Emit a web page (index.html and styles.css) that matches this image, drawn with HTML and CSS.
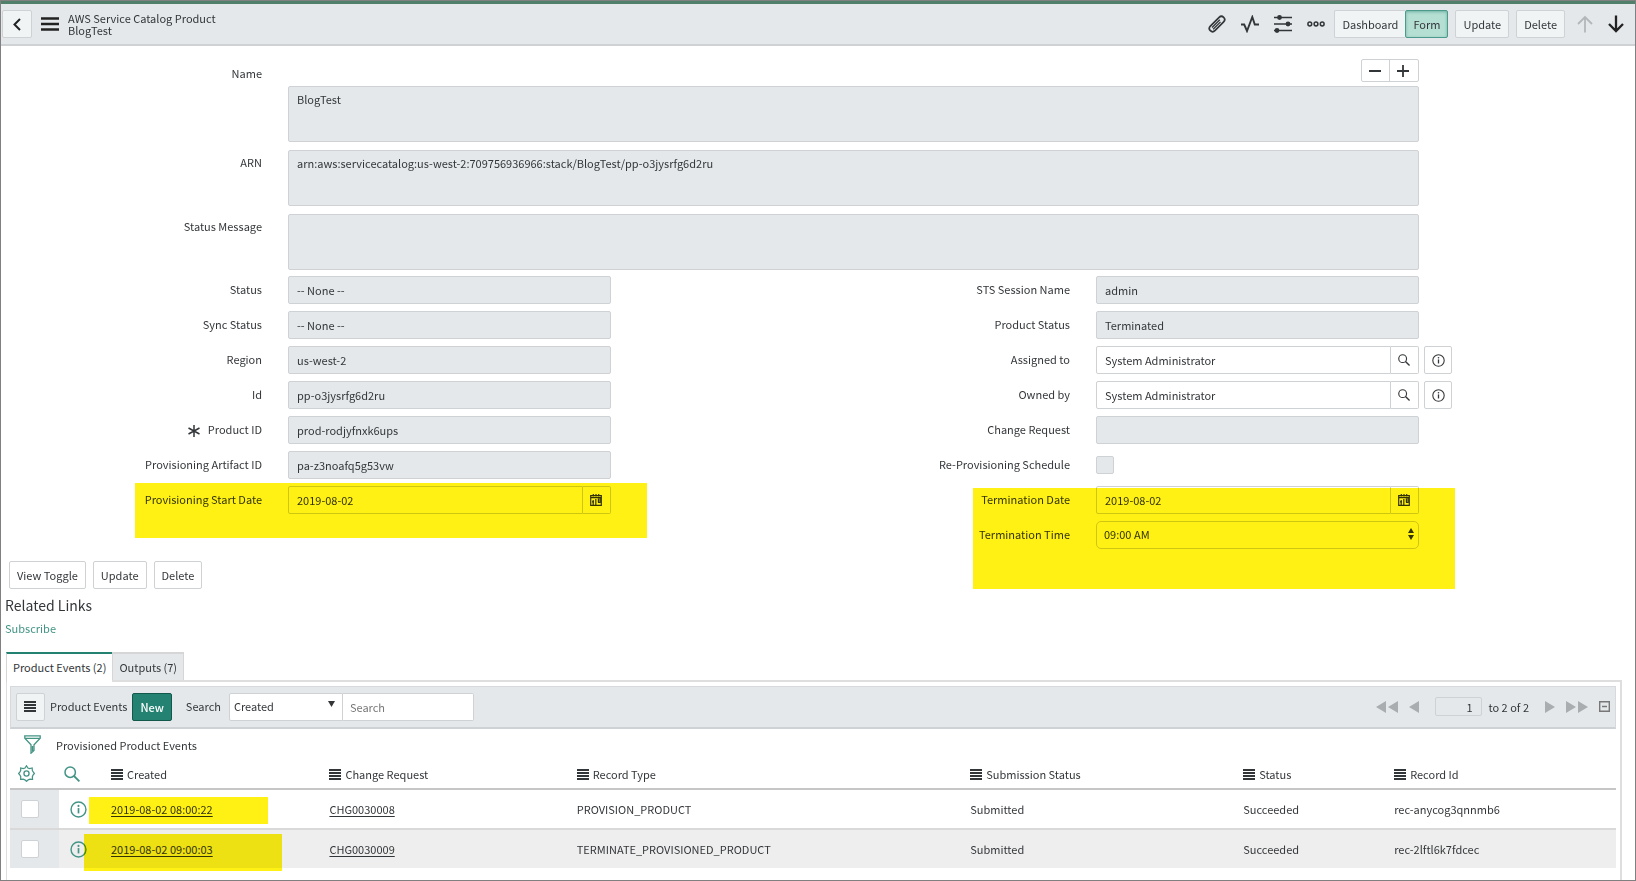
FILE: index.html
```html
<!DOCTYPE html>
<html lang="en">
<head>
  <meta charset="utf-8">
  <title>BlogTest | AWS Service Catalog Product</title>
  <link rel="stylesheet" href="styles.css">
</head>
<body>
  <svg class="sprite" aria-hidden="true">
    <symbol id="icon-bars" viewBox="0 0 18 14">
      <path d="M0 1.5h18M0 7h18M0 12.5h18" fill="none" stroke="currentColor" stroke-width="2.4"/>
    </symbol>
    <symbol id="icon-list" viewBox="0 0 12 11">
      <path d="M0 1h12M0 4h12M0 7h12M0 10h12" fill="none" stroke="currentColor" stroke-width="1.8"/>
    </symbol>
    <symbol id="icon-search" viewBox="0 0 16 16">
      <circle cx="6.2" cy="6.2" r="5.2" fill="none" stroke="currentColor" stroke-width="1.5"/>
      <path d="M10 10l5.4 5.4" fill="none" stroke="currentColor" stroke-width="1.8"/>
    </symbol>
    <symbol id="icon-info" viewBox="0 0 18 18">
      <circle cx="9" cy="9" r="7.9" fill="none" stroke="currentColor" stroke-width="1.5"/>
      <path d="M9 7.5v5.6" fill="none" stroke="currentColor" stroke-width="1.8"/>
      <circle cx="9" cy="5.2" r="1.1" fill="currentColor"/>
    </symbol>
    <symbol id="icon-calendar" viewBox="0 0 12 12">
      <path d="M.7 1.700h10.600v9.600H.7zM1 3.700h10M3.300 0v2.500M6 0v2.500M8.700 0v2.500M3.200 6v5M5.800 5v6M2 7.800h2M8.400 4.500v4M10 4v4.500H8" fill="none" stroke="currentColor" stroke-width="1.2"/>
    </symbol>
    <symbol id="icon-prev" viewBox="0 0 10 12"><path d="M10 0v12L0 6z" fill="currentColor"/></symbol>
    <symbol id="icon-next" viewBox="0 0 10 12"><path d="M0 0v12l10-6z" fill="currentColor"/></symbol>
    <symbol id="icon-first" viewBox="0 0 22 12"><path d="M10 0v12L0 6zM22 0v12L12 6z" fill="currentColor"/></symbol>
    <symbol id="icon-last" viewBox="0 0 22 12"><path d="M0 0v12l10-6zM12 0v12l10-6z" fill="currentColor"/></symbol>
  </svg>

  <header class="navbar">
    <button class="btn btn-back" aria-label="Back">
      <svg width="8" height="13" viewBox="0 0 8 13"><path d="M7 1L1.5 6.5 7 12" fill="none" stroke="currentColor" stroke-width="2"/></svg>
    </button>
    <button class="icon-btn nav-menu" aria-label="Menu"><svg width="18" height="14"><use href="#icon-bars"/></svg></button>
    <h1 class="nav-title">AWS Service Catalog Product<span>BlogTest</span></h1>
    <div class="nav-tools">
      <button class="icon-btn" aria-label="Attachments">
        <svg width="18" height="18" viewBox="0 0 18 18">
          <g transform="rotate(45 9 9)" fill="none" stroke="currentColor">
            <path d="M5.800 2.800a3.200 3.200 0 0 1 6.400 0v12.400a3.200 3.200 0 0 1-6.400 0z" stroke-width="1.700"/>
            <path d="M8 15V4M10 5v10.500" stroke-width="1.300"/>
          </g>
        </svg>
      </button>
      <button class="icon-btn" aria-label="Activity">
        <svg width="18" height="18" viewBox="0 0 18 18"><path d="M0 9.500h3.200L6 16 11.300 2l2.500 7.500H18" fill="none" stroke="currentColor" stroke-width="1.9"/></svg>
      </button>
      <button class="icon-btn" aria-label="Personalize form">
        <svg width="18" height="18" viewBox="0 0 18 18">
          <path d="M0 2.500h18M0 9h18M0 15.500h18" fill="none" stroke="currentColor" stroke-width="1.5"/>
          <g fill="currentColor"><circle cx="5.500" cy="2.500" r="2.400"/><circle cx="14" cy="9" r="2.400"/><circle cx="3" cy="15.500" r="2.400"/></g>
        </svg>
      </button>
      <button class="icon-btn" aria-label="More options">
        <svg width="18" height="18" viewBox="0 0 18 18">
          <g fill="none" stroke="currentColor" stroke-width="1.500"><circle cx="2.800" cy="9" r="1.900"/><circle cx="9" cy="9" r="1.900"/><circle cx="15.200" cy="9" r="1.900"/></g>
        </svg>
      </button>
    </div>
    <div class="nav-actions">
      <div class="btn-group">
        <button class="btn">Dashboard</button>
        <button class="btn btn-selected">Form</button>
      </div>
      <button class="btn">Update</button>
      <button class="btn">Delete</button>
    </div>
    <div class="nav-arrows">
      <button class="icon-btn muted" aria-label="Previous record">
        <svg width="16" height="18" viewBox="0 0 16 18"><path d="M8 17.500V2M1 9l7-7 7 7" fill="none" stroke="currentColor" stroke-width="1.800"/></svg>
      </button>
      <button class="icon-btn" aria-label="Next record">
        <svg width="16" height="18" viewBox="0 0 16 18"><path d="M8 .5V16M1 9l7 7 7-7" fill="none" stroke="currentColor" stroke-width="2.300"/></svg>
      </button>
    </div>
  </header>

  <form class="record">
    <div class="row-full">
      <label for="name">Name</label>
      <div class="control">
        <div class="resizer">
          <button type="button" aria-label="Shrink"><svg width="12" height="12" viewBox="0 0 12 12"><path d="M0 6h12" stroke="currentColor" stroke-width="2"/></svg></button>
          <button type="button" aria-label="Expand"><svg width="12" height="12" viewBox="0 0 12 12"><path d="M0 6h12M6 0v12" stroke="currentColor" stroke-width="1.800"/></svg></button>
        </div>
        <textarea id="name" readonly>BlogTest</textarea>
      </div>
    </div>
    <div class="row-full">
      <label for="arn">ARN</label>
      <div class="control"><textarea id="arn" readonly>arn:aws:servicecatalog:us-west-2:709756936966:stack/BlogTest/pp-o3jysrfg6d2ru</textarea></div>
    </div>
    <div class="row-full">
      <label for="message">Status Message</label>
      <div class="control"><textarea id="message" readonly></textarea></div>
    </div>

    <div class="columns">
      <div class="column">
        <div class="row">
          <label for="status">Status</label>
          <select id="status" class="field" disabled><option>-- None --</option></select>
        </div>
        <div class="row">
          <label for="sync">Sync Status</label>
          <select id="sync" class="field" disabled><option>-- None --</option></select>
        </div>
        <div class="row">
          <label for="region">Region</label>
          <input id="region" class="field" readonly value="us-west-2">
        </div>
        <div class="row">
          <label for="id">Id</label>
          <input id="id" class="field" readonly value="pp-o3jysrfg6d2ru">
        </div>
        <div class="row">
          <label for="product">
            <svg class="required" width="12" height="12" viewBox="0 0 12 12"><path d="M6 0v12M.5 3l11 6M11.500 3L.5 9" stroke="currentColor" stroke-width="1.500"/></svg>Product ID</label>
          <input id="product" class="field" readonly value="prod-rodjyfnxk6ups">
        </div>
        <div class="row">
          <label for="artifact">Provisioning Artifact ID</label>
          <input id="artifact" class="field" readonly value="pa-z3noafq5g53vw">
        </div>
        <div class="marked marked-start">
          <div class="row">
            <label for="start">Provisioning Start Date</label>
            <div class="input-group">
              <input id="start" class="field" value="2019-08-02">
              <button type="button" aria-label="Choose date"><svg width="12" height="12"><use href="#icon-calendar"/></svg></button>
            </div>
          </div>
        </div>
      </div>

      <div class="column">
        <div class="row">
          <label for="session">STS Session Name</label>
          <input id="session" class="field" readonly value="admin">
        </div>
        <div class="row">
          <label for="pstatus">Product Status</label>
          <select id="pstatus" class="field" disabled><option>Terminated</option></select>
        </div>
        <div class="row">
          <label for="assigned">Assigned to</label>
          <div class="input-group">
            <input id="assigned" class="field" value="System Administrator">
            <button type="button" aria-label="Look up user"><svg width="12" height="12"><use href="#icon-search"/></svg></button>
          </div>
          <button type="button" class="btn-info" aria-label="Preview"><svg width="13" height="13"><use href="#icon-info"/></svg></button>
        </div>
        <div class="row">
          <label for="owned">Owned by</label>
          <div class="input-group">
            <input id="owned" class="field" value="System Administrator">
            <button type="button" aria-label="Look up user"><svg width="12" height="12"><use href="#icon-search"/></svg></button>
          </div>
          <button type="button" class="btn-info" aria-label="Preview"><svg width="13" height="13"><use href="#icon-info"/></svg></button>
        </div>
        <div class="row">
          <label for="change">Change Request</label>
          <input id="change" class="field" readonly>
        </div>
        <div class="row">
          <label for="schedule">Re-Provisioning Schedule</label>
          <input id="schedule" type="checkbox" class="checkbox" disabled>
        </div>
        <div class="marked marked-end">
          <div class="row">
            <label for="tdate">Termination Date</label>
            <div class="input-group">
              <input id="tdate" class="field" value="2019-08-02">
              <button type="button" aria-label="Choose date"><svg width="12" height="12"><use href="#icon-calendar"/></svg></button>
            </div>
          </div>
          <div class="row">
            <label for="ttime">Termination Time</label>
            <div class="select">
              <select id="ttime" class="field"><option>09:00 AM</option></select>
              <svg width="6" height="12" viewBox="0 0 6 12"><path d="M0 5l3-5 3 5zM0 7l3 5 3-5z" fill="currentColor"/></svg>
            </div>
          </div>
        </div>
      </div>
    </div>

    <div class="form-actions">
      <button type="button" class="btn">View Toggle</button>
      <button type="button" class="btn">Update</button>
      <button type="button" class="btn">Delete</button>
    </div>
  </form>

  <section class="related">
    <h2>Related Links</h2>
    <a href="#subscribe">Subscribe</a>
  </section>

  <div class="tabs" role="tablist">
    <button class="tab active" role="tab">Product Events (2)</button>
    <button class="tab" role="tab">Outputs (7)</button>
  </div>

  <section class="panel">
    <div class="toolbar">
      <button class="btn btn-list" aria-label="List menu"><svg width="12" height="11"><use href="#icon-list"/></svg></button>
      <h3>Product Events</h3>
      <button class="btn btn-primary">New</button>
      <label for="searchField">Search</label>
      <div class="search-group">
        <div class="select">
          <select id="searchField"><option>Created</option></select>
          <svg width="7" height="6" viewBox="0 0 7 6"><path d="M0 0h7L3.500 6z" fill="currentColor"/></svg>
        </div>
        <input type="text" placeholder="Search" aria-label="Search text">
      </div>
      <div class="pager">
        <button aria-label="First page"><svg width="22" height="12"><use href="#icon-first"/></svg></button>
        <button aria-label="Previous page"><svg width="10" height="12"><use href="#icon-prev"/></svg></button>
        <div class="pager-count"><input type="text" value="1" aria-label="Row"><span>to 2 of 2</span></div>
        <button aria-label="Next page"><svg width="10" height="12"><use href="#icon-next"/></svg></button>
        <button aria-label="Last page"><svg width="22" height="12"><use href="#icon-last"/></svg></button>
        <button class="collapse" aria-label="Collapse"><svg width="11" height="11" viewBox="0 0 11 11"><path d="M.7.7h9.600v9.600H.7zM3 5.500h5" fill="none" stroke="currentColor" stroke-width="1.400"/></svg></button>
      </div>
    </div>

    <div class="filter">
      <button class="icon-btn teal" aria-label="Filter">
        <svg width="17" height="19" viewBox="0 0 17 19"><path d="M.8.8h15.400v2.400L10 9.800v5.700l-3 2.700V9.800L.8 3.200zM1 3.300h15M8.500 11v5" fill="none" stroke="currentColor" stroke-width="1.300"/></svg>
      </button>
      <span>Provisioned Product Events</span>
    </div>

    <table class="events">
      <colgroup>
        <col class="col-check"><col class="col-info"><col class="col-created"><col class="col-change"><col class="col-type"><col class="col-submission"><col class="col-status"><col>
      </colgroup>
      <thead>
        <tr>
          <th><button class="icon-btn teal gear" aria-label="Personalize list">
            <svg width="17" height="17" viewBox="0 0 18 18"><path d="M9 .8l1.500 2.400 1.800.7 2.700-.7.2 2.700.9 1.500L17.400 9l-1.500 1.800-.7 1.600.2 2.700-2.700-.2-1.900.8L9 17.300l-1.700-1.600-1.800-.8-2.700.2.1-2.700-.8-1.600L.6 9l1.500-1.700.8-1.600-.1-2.600 2.700.7 1.900-.6z" fill="none" stroke="currentColor" stroke-width="1.300"/><circle cx="9" cy="9" r="2.700" fill="none" stroke="currentColor" stroke-width="1.400"/></svg>
          </button></th>
          <th><button class="icon-btn teal find" aria-label="Search columns"><svg width="16" height="16"><use href="#icon-search"/></svg></button></th>
          <th><svg width="12" height="11"><use href="#icon-list"/></svg>Created</th>
          <th><svg width="12" height="11"><use href="#icon-list"/></svg>Change Request</th>
          <th><svg width="12" height="11"><use href="#icon-list"/></svg>Record Type</th>
          <th><svg width="12" height="11"><use href="#icon-list"/></svg>Submission Status</th>
          <th><svg width="12" height="11"><use href="#icon-list"/></svg>Status</th>
          <th><svg width="12" height="11"><use href="#icon-list"/></svg>Record Id</th>
        </tr>
      </thead>
      <tbody>
        <tr>
          <td class="check"><input type="checkbox" class="checkbox" aria-label="Select record"></td>
          <td class="info"><button class="icon-btn teal" aria-label="Preview record"><svg width="17" height="17"><use href="#icon-info"/></svg></button></td>
          <td class="marked marked-first"><a href="#event1">2019-08-02 08:00:22</a></td>
          <td><a href="#CHG0030008">CHG0030008</a></td>
          <td>PROVISION_PRODUCT</td>
          <td>Submitted</td>
          <td>Succeeded</td>
          <td>rec-anycog3qnnmb6</td>
        </tr>
        <tr>
          <td class="check"><input type="checkbox" class="checkbox" aria-label="Select record"></td>
          <td class="info"><button class="icon-btn teal" aria-label="Preview record"><svg width="17" height="17"><use href="#icon-info"/></svg></button></td>
          <td class="marked marked-second"><a href="#event2">2019-08-02 09:00:03</a></td>
          <td><a href="#CHG0030009">CHG0030009</a></td>
          <td>TERMINATE_PROVISIONED_PRODUCT</td>
          <td>Submitted</td>
          <td>Succeeded</td>
          <td>rec-2lftl6k7fdcec</td>
        </tr>
      </tbody>
    </table>
  </section>
</body>
</html>
```

FILE: styles.css
```css
:root {
  --text: #333639;
  --gray-bg: #e4e8eb;
  --border: #cfd2d4;
  --teal: #238272;
  --teal-icon: #439485;
  --marker: #fff114;
}

* {
  box-sizing: border-box;
}

body {
  margin: 0;
  min-height: 100vh;
  display: flex;
  flex-direction: column;
  border: 1px solid #808080;
  background-color: #fff;
  color: var(--text);
  font-family: "Noto Sans CJK SC", sans-serif;
  font-size: 11px;
  line-height: 16px;
}

button, input, select, textarea {
  margin: 0;
  font: inherit;
  color: inherit;
}

button {
  cursor: pointer;
}

svg {
  display: block;
}

.sprite {
  position: absolute;
  width: 0;
  height: 0;
}

/* buttons */
.btn {
  height: 28px;
  padding: 0 7px 1px;
  border: 1px solid var(--border);
  border-radius: 2px;
  background-color: #fff;
  white-space: nowrap;
}

.icon-btn {
  padding: 0;
  border: none;
  background: none;
}

.nav-arrows .muted {
  color: #b3b7ba;
}

.teal {
  color: var(--teal-icon);
}

/* top bar */
.navbar {
  display: flex;
  align-items: center;
  height: 45px;
  padding: 0 11px 0 1px;
  border-top: 3px solid #508069;
  border-bottom: 2px solid var(--border);
  background-color: var(--gray-bg);
}

.navbar .btn {
  background-color: #f1f4f5;
}

.navbar .btn-back {
  width: 30px;
  padding: 0 0 0 10px;
  color: #222;
}

.nav-menu {
  margin-left: 9px;
  color: #222;
}

.nav-title {
  flex: 1;
  margin: 0 0 0 9px;
  font-size: 11px;
  font-weight: 400;
  line-height: 12px;
}

.nav-title span {
  display: block;
}

.nav-tools {
  display: flex;
  gap: 15px;
  margin-right: 9px;
}

.nav-actions {
  display: flex;
  gap: 7px;
}

.btn-group {
  display: flex;
}

.btn-group .btn:first-child {
  border-right: none;
  border-radius: 2px 0 0 2px;
}

.navbar .btn-selected {
  border-color: #4b9a8b;
  background-color: #b5dfd3;
  box-shadow: inset 0 1px 3px rgba(39, 134, 117, 0.5);
}

.nav-arrows {
  display: flex;
  gap: 15px;
  margin-left: 12px;
  color: #222;
}

/* record form */
.record {
  padding: 13px 18px 0 0;
}

.row-full {
  display: grid;
  grid-template-columns: 287px 62fr 38fr 287px 62fr 38fr;
  margin-bottom: 8px;
}

.row-full label {
  padding: 4px 26px 0 0;
  text-align: right;
}

.row-full:first-child label {
  padding-top: 6px;
}

.row-full .control {
  grid-column: 2 / 6;
}

.resizer {
  display: flex;
  width: 58px;
  height: 23px;
  margin: 0 0 4px auto;
  border: 1px solid var(--border);
  border-radius: 2px;
}

.resizer button {
  width: 27px;
  padding: 0 7px;
  border: none;
  background: none;
}

.resizer button + button {
  border-left: 1px solid var(--border);
}

textarea {
  display: block;
  width: 100%;
  height: 56px;
  padding: 4px 8px;
  border: 1px solid var(--border);
  border-radius: 2px;
  background-color: var(--gray-bg);
  resize: none;
}

.columns {
  display: grid;
  grid-template-columns: 1fr 1fr;
  margin-top: -2px;
}

.column {
  display: flex;
  flex-direction: column;
  gap: 7px;
}

.row {
  display: grid;
  grid-template-columns: 287px 62fr 38fr;
  align-items: center;
  min-height: 28px;
}

.row label {
  padding: 0 26px 2px 0;
  text-align: right;
}

.required {
  display: inline-block;
  margin-right: 8px;
  vertical-align: -3px;
}

.field {
  width: 100%;
  height: 28px;
  padding: 0 8px;
  border: 1px solid var(--border);
  border-radius: 2px;
  background-color: #fff;
  appearance: none;
}

.field:read-only:not(select),
.field:disabled {
  background-color: var(--gray-bg);
  color: inherit;
  opacity: 1;
}

.input-group {
  display: flex;
}

.input-group .field {
  flex: 1;
  min-width: 0;
  border-radius: 2px 0 0 2px;
}

.input-group button {
  width: 28px;
  padding: 0 7px;
  border: 1px solid var(--border);
  border-left: none;
  border-radius: 0 2px 2px 0;
  background-color: #fff;
}

.btn-info {
  width: 28px;
  height: 28px;
  margin-left: 5px;
  padding: 0 7px;
  border: 1px solid var(--border);
  border-radius: 2px;
  background-color: #fff;
}

.checkbox {
  display: block;
  width: 18px;
  height: 18px;
  border: 1px solid var(--border);
  border-radius: 2px;
  background-color: #fff;
  appearance: none;
}

.checkbox:disabled {
  background-color: var(--gray-bg);
}

.select {
  position: relative;
}

.select svg {
  position: absolute;
  top: 7px;
  right: 5px;
  pointer-events: none;
}

.select .field {
  padding: 0 7px 2px;
  border-radius: 5px;
}

/* marker strokes over dates */
.marked {
  position: relative;
}

.marked::after {
  content: "";
  position: absolute;
  background-color: var(--marker);
  mix-blend-mode: multiply;
  pointer-events: none;
}

.marked-start::after {
  top: -3px;
  right: 162px;
  bottom: -24px;
  left: 134px;
}

.marked-end {
  display: flex;
  flex-direction: column;
  gap: 7px;
}

.marked-end::after {
  top: 2px;
  right: 162px;
  bottom: -40px;
  left: 164px;
}

.form-actions {
  display: flex;
  gap: 7px;
  margin: 12px 0 0 8px;
}

/* related links */
.related {
  padding: 6px 4px 0;
}

.related h2 {
  margin: 0 0 5px;
  font-size: 14px;
  font-weight: 400;
  line-height: 20px;
}

.related a {
  display: block;
  color: var(--teal-icon);
  text-decoration: none;
}

.tabs {
  display: flex;
  margin: 16px 14px 0 5px;
}

.tab {
  height: 28px;
  padding: 0 6px;
  border: 1px solid #d6d6d6;
  border-top-width: 2px;
  border-bottom: none;
  background-color: var(--gray-bg);
}

.tab.active {
  position: relative;
  height: 30px;
  margin-bottom: -2px;
  padding-bottom: 2px;
  border-top: 2px solid var(--teal);
  border-right: none;
  background-color: #fff;
}

/* related list */
.panel {
  flex: 1;
  margin: 0 13px 0 5px;
  padding: 4px 4px 0 3px;
  border: 2px solid #dedede;
  border-left-width: 1px;
  border-bottom: none;
}

.toolbar {
  display: flex;
  align-items: center;
  height: 43px;
  padding: 0 5px;
  border: 1px solid #d6dadc;
  border-bottom: 2px solid var(--border);
  background-color: var(--gray-bg);
}

.toolbar h3 {
  margin: 0 5px;
  padding-bottom: 2px;
  font-size: 11px;
  font-weight: 400;
}

.toolbar label {
  margin: 0 8px 0 14px;
  padding-bottom: 2px;
}

.btn-list {
  width: 29px;
  background-color: #f1f4f5;
}

.toolbar .btn-primary {
  border-color: #12594c;
  background-color: var(--teal);
  color: #fff;
  font-weight: 500;
}

.search-group {
  display: flex;
}

.search-group select,
.search-group input {
  display: block;
  height: 28px;
  border: 1px solid var(--border);
  background-color: #fff;
  appearance: none;
}

.search-group select {
  width: 114px;
  padding: 0 4px 3px;
  border-radius: 2px 0 0 2px;
}

.search-group input {
  width: 131px;
  padding: 0 7px;
  border-left: none;
  border-radius: 0 2px 2px 0;
}

.search-group input::placeholder {
  color: #777;
}

.search-group .select svg {
  top: 8px;
  right: 8px;
}

.pager {
  display: flex;
  align-items: center;
  gap: 11px;
  margin-left: auto;
  padding-bottom: 1px;
}

.pager button {
  padding: 0;
  border: none;
  background: none;
  color: #a9adb0;
}

.pager-count {
  display: flex;
  align-items: center;
  gap: 7px;
  margin: 0 5px;
}

.pager input {
  width: 47px;
  height: 19px;
  padding: 0 8px;
  border: 1px solid var(--border);
  border-radius: 2px;
  background: none;
  text-align: right;
}

.pager .collapse {
  color: #777;
}

.filter {
  display: flex;
  align-items: center;
  gap: 15px;
  height: 31px;
  padding-left: 14px;
}

.events {
  width: 100%;
  table-layout: fixed;
  border-collapse: separate;
  border-spacing: 0;
}

.col-check {
  width: 49px;
}

.col-info {
  width: 52px;
}

.col-created {
  width: 13.6%;
}

.col-change {
  width: 15.4%;
}

.col-type {
  width: 24.5%;
}

.col-submission {
  width: 17%;
}

.col-status {
  width: 9.4%;
}

.events th,
.events td {
  padding: 0;
  text-align: left;
  font-weight: 400;
  white-space: nowrap;
}

.events th {
  height: 30px;
  padding-bottom: 1px;
  border-bottom: 2px solid #c6c6c6;
}

.events th > svg {
  display: inline-block;
  margin-right: 4px;
  vertical-align: -1px;
}

.gear {
  display: block;
  margin-left: 8px;
}

.find {
  display: block;
  margin-left: 5px;
}

.events td {
  height: 40px;
}

.events tbody tr:first-child td {
  border-bottom: 2px solid #d9d9d9;
}

.events tbody tr:last-child td {
  height: 38px;
  background-color: #eee;
}

.events tbody td.check,
.events tbody tr:last-child td.check {
  background-color: var(--gray-bg);
}

.events td a {
  color: inherit;
  text-underline-offset: 2px;
}

.check .checkbox {
  margin-left: 11px;
}

.info .icon-btn {
  display: block;
  margin-left: 11px;
}

.marked-first::after {
  top: 7px;
  left: -22px;
  width: 179px;
  height: 27px;
}

.marked-second::after {
  top: 4px;
  left: -27px;
  width: 198px;
  height: 37px;
}
```
